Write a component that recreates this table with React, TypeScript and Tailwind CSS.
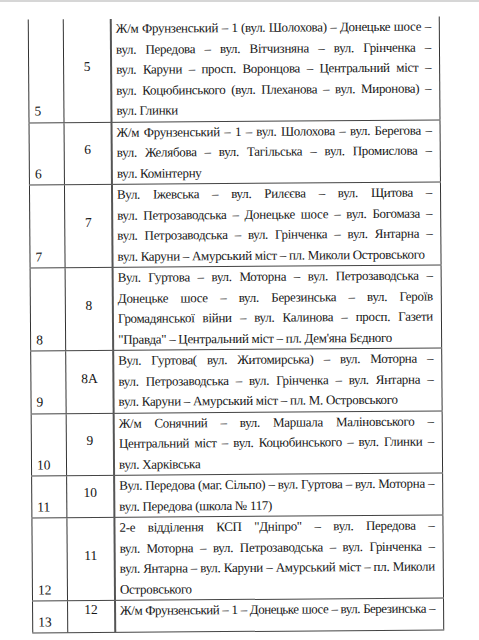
import React from "react";

type Row = { a: string; b: string; lines: string[]; h?: string };

const rows: Row[] = [
  {
    a: "5",
    b: "5",
    lines: [
      "Ж/м Фрунзенський – 1 (вул. Шолохова) – Донецьке шосе –",
      "вул. Передова – вул. Вітчизняна – вул. Грінченка –",
      "вул. Каруни – просп. Воронцова – Центральний міст –",
      "вул. Коцюбинського (вул. Плеханова – вул. Миронова) –",
      "вул. Глинки",
    ],
  },
  {
    a: "6",
    b: "6",
    lines: [
      "Ж/м Фрунзенський – 1 – вул. Шолохова – вул. Берегова –",
      "вул. Желябова – вул. Тагільська – вул. Промислова –",
      "вул. Комінтерну",
    ],
  },
  {
    a: "7",
    b: "7",
    lines: [
      "Вул. Іжевська – вул. Рилєєва – вул. Щитова –",
      "вул. Петрозаводська – Донецьке шосе – вул. Богомаза –",
      "вул. Петрозаводська – вул. Грінченка – вул. Янтарна –",
      "вул. Каруни – Амурський міст – пл. Миколи Островського",
    ],
  },
  {
    a: "8",
    b: "8",
    lines: [
      "Вул. Гуртова – вул. Моторна – вул. Петрозаводська –",
      "Донецьке шосе – вул. Березинська – вул. Героїв",
      "Громадянської війни – вул. Калинова – просп. Газети",
      "\"Правда\" – Центральний міст – пл. Дем'яна Бєдного",
    ],
  },
  {
    a: "9",
    b: "8А",
    lines: [
      "Вул. Гуртова( вул. Житомирська) – вул. Моторна –",
      "вул. Петрозаводська – вул. Грінченка – вул. Янтарна –",
      "вул. Каруни – Амурський міст – пл. М. Островського",
    ],
  },
  {
    a: "10",
    b: "9",
    lines: [
      "Ж/м Сонячний – вул. Маршала Маліновського –",
      "Центральний міст – вул. Коцюбинського – вул. Глинки –",
      "вул. Харківська",
    ],
  },
  {
    a: "11",
    b: "10",
    lines: [
      "Вул. Передова (маг. Сільпо) – вул. Гуртова – вул. Моторна –",
      "вул. Передова (школа № 117)",
    ],
  },
  {
    a: "12",
    b: "11",
    lines: [
      "2-е відділення КСП \"Дніпро\" – вул. Передова –",
      "вул. Моторна – вул. Петрозаводська – вул. Грінченка –",
      "вул. Янтарна – вул. Каруни – Амурський міст – пл. Миколи",
      "Островського",
    ],
  },
  {
    a: "13",
    b: "12",
    lines: ["Ж/м Фрунзенський – 1 – Донецьке шосе – вул. Березинська –"],
    h: "tall",
  },
];

export default function App() {
  return (
    <div className="w-[479px] h-[640px] bg-white overflow-hidden relative font-['Liberation_Serif','Times_New_Roman',serif]">
      <div className="h-[2px] bg-[#d6d6d6]" />
      <div className="pt-[16px] pl-[30px]">
        <div className="w-[412px] rotate-[-0.42deg] leading-[20.5px] text-[#151515]">
          {rows.map((r, i) => (
            <div
              key={i}
              className={
                "grid grid-cols-[35px_47px_330px] border-b border-[#444] " +
                (r.h === "tall" ? "min-h-[32px]" : "")
              }
            >
              <div className="border-l border-[#333] flex items-end pl-[5px] text-[13.5px]">
                <span>{r.a}</span>
              </div>
              <div className="border-l border-[#333] flex items-center justify-center text-[13.5px]">
                <span className={r.h === "tall" ? "-mt-[12px]" : "-mt-[6px]"}>{r.b}</span>
              </div>
              <div className="border-l-2 border-r border-l-[#555] border-r-[#333] pl-[4px] pr-[8px] min-w-0 overflow-hidden text-[13px] tracking-[-0.3px]">
                {r.lines.map((l, j) => {
                  const last = j === r.lines.length - 1 && r.h !== "tall";
                  const tight = r.h === "tall" ? " tracking-[-0.5px] [word-spacing:-1px]" : "";
                  return (
                    <div
                      key={j}
                      className={
                        (last
                          ? "whitespace-nowrap text-left"
                          : "whitespace-nowrap text-justify [text-align-last:justify]") + tight
                      }
                    >
                      {l}
                    </div>
                  );
                })}
              </div>
            </div>
          ))}
        </div>
      </div>
    </div>
  );
}
